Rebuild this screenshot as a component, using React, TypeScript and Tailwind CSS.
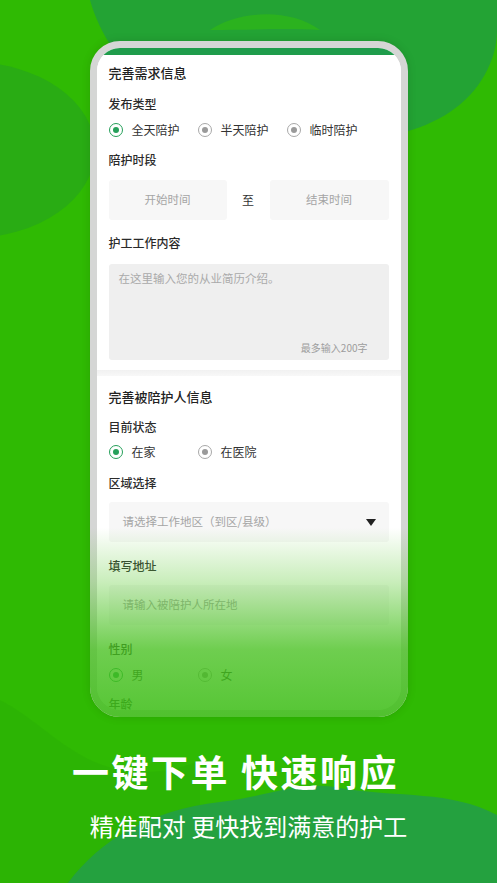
import type { ReactNode } from "react";

const font = { fontFamily: '"Noto Sans CJK SC", "Noto Sans", sans-serif' };

function Radio({ label, checked }: { label: string; checked?: boolean }) {
  return (
    <div className="flex w-[89px] items-center gap-[9px]">
      <span
        className={`flex size-[14px] items-center justify-center rounded-full border-[1.5px] ${
          checked ? "border-[#26a05a]" : "border-[#a8a8a8]"
        }`}
      >
        <span
          className={`size-[6px] rounded-full ${checked ? "bg-[#26a05a]" : "bg-[#9a9a9a]"}`}
        />
      </span>
      <span className="text-[12px] leading-[20px] text-[#333]">{label}</span>
    </div>
  );
}

function Label({ children, className = "" }: { children: ReactNode; className?: string }) {
  return (
    <div className={`h-[20px] text-[12px] leading-[20px] font-medium text-[#2b2b2b] ${className}`}>
      {children}
    </div>
  );
}

function Title({ children, className = "" }: { children: ReactNode; className?: string }) {
  return (
    <div className={`h-[20px] text-[13px] leading-[20px] font-medium text-[#222] ${className}`}>
      {children}
    </div>
  );
}

function Background() {
  return (
    <svg
      className="absolute inset-0"
      width="497"
      height="883"
      viewBox="0 0 497 883"
      fill="none"
    >
      <ellipse cx="-30" cy="150" rx="125" ry="88" fill="#29ac14" />
      <path
        d="M90 0 C110 70 170 115 260 132 C330 145 400 145 450 112 C480 92 497 60 497 30 L497 0 Z"
        fill="#23a334"
      />
      <path
        d="M210 30 C240 10 290 8 320 30 C290 28 250 30 210 30 Z"
        fill="#2bb21e"
      />
      <path
        d="M0 700 C40 720 70 760 120 770 C150 775 180 770 200 760 L200 883 L0 883 Z"
        fill="#2bb005"
        opacity="0.6"
      />
      <path
        d="M68 883 C100 840 150 810 220 802 C270 796 300 780 340 788 C400 798 450 790 497 815 L497 883 Z"
        fill="#24a13f"
      />
    </svg>
  );
}

function Phone() {
  return (
    <div className="relative mt-[41px] h-[676px] w-[318px] rounded-[30px] border-[7px] border-[#d5d6d5] bg-white shadow-[0_0_10px_rgba(0,0,0,0.12)]">
      <div className="h-full w-full overflow-hidden rounded-[23px] bg-white">
        <div className="h-[7px] bg-[#1f9c4b]" />
        <div className="px-[12px]">
          <Title className="mt-[8px]">完善需求信息</Title>
          <Label className="mt-[11px]">发布类型</Label>
          <div className="mt-[6px] flex">
            <Radio label="全天陪护" checked />
            <Radio label="半天陪护" />
            <Radio label="临时陪护" />
          </div>
          <Label className="mt-[10px]">陪护时段</Label>
          <div className="mt-[10px] flex h-[40px] items-center">
            <div className="flex h-full w-[118px] items-center justify-center rounded-[3px] bg-[#f7f7f7] text-[11.5px] text-[#a5a5a5]">
              开始时间
            </div>
            <div className="flex-1 text-center text-[12px] text-[#333]">至</div>
            <div className="flex h-full w-[119px] items-center justify-center rounded-[3px] bg-[#f7f7f7] text-[11.5px] text-[#a5a5a5]">
              结束时间
            </div>
          </div>
          <Label className="mt-[13px]">护工工作内容</Label>
          <div className="relative mt-[11px] h-[96px] rounded-[3px] bg-[#efefef]">
            <div className="pl-[10px] pt-[6px] text-[11.5px] leading-[16px] text-[#aaa]">
              在这里输入您的从业简历介绍。
            </div>
            <div className="absolute bottom-[5px] right-[21px] text-[10px] leading-[14px] text-[#9d9d9d]">
              最多输入200字
            </div>
          </div>
        </div>
        <div className="mt-[10px] h-[6px] bg-gradient-to-b from-[#f1f1f1] to-[#f8f8f8]" />
        <div className="px-[12px]">
          <Title className="mt-[11px]">完善被陪护人信息</Title>
          <Label className="mt-[10px]">目前状态</Label>
          <div className="mt-[5px] flex">
            <Radio label="在家" checked />
            <Radio label="在医院" />
          </div>
          <Label className="mt-[11px]">区域选择</Label>
          <div className="mt-[9px] flex h-[40px] items-center justify-between rounded-[3px] bg-[#f7f7f7] pl-[14px] pr-[13px]">
            <span className="text-[11.5px] text-[#a5a5a5]">请选择工作地区（到区/县级）</span>
            <svg width="10" height="7" viewBox="0 0 10 7">
              <path d="M0 0 H10 L5 7 Z" fill="#222" />
            </svg>
          </div>
          <Label className="mt-[14px]">填写地址</Label>
          <div className="mt-[9px] flex h-[40px] items-center rounded-[3px] bg-[#f7f7f7] pl-[14px]">
            <span className="text-[11.5px] text-[#a5a5a5]">请输入被陪护人所在地</span>
          </div>
          <Label className="mt-[14px]">性别</Label>
          <div className="mt-[6px] flex">
            <Radio label="男" checked />
            <Radio label="女" />
          </div>
          <Label className="mt-[9px]">年龄</Label>
        </div>
      </div>
      <div className="pointer-events-none absolute -inset-[7px] rounded-[30px] bg-[linear-gradient(to_bottom,rgba(60,190,20,0)_72%,rgba(100,205,60,0.35)_80%,rgba(70,192,30,0.78)_90%,rgba(62,190,24,0.88)_100%)]" />
    </div>
  );
}

export default function App() {
  return (
    <div
      className="relative h-[883px] w-[497px] overflow-hidden bg-[#2fba03]"
      style={font}
    >
      <Background />
      <div className="relative flex flex-col items-center">
        <Phone />
        <h1 className="mr-[26px] mt-[32px] text-[37px] leading-[44px] font-semibold tracking-[2.5px] text-white">
          一键下单 快速响应
        </h1>
        <p className="mt-[17px] text-[24px] leading-[32px] text-white">
          精准配对 更快找到满意的护工
        </p>
      </div>
    </div>
  );
}
